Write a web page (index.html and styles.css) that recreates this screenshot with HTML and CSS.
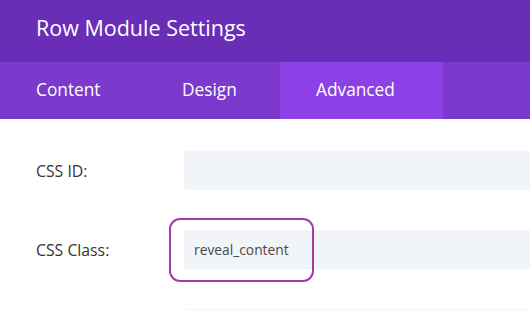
FILE: index.html
```html
<!DOCTYPE html>
<html lang="en">

<head>
    <meta charset="UTF-8">
    <meta name="viewport" content="width=device-width, initial-scale=1.0">
    <title>Row Module Settings</title>
    <link rel="stylesheet" href="styles.css">
</head>

<body>
    <div class="modal-header">Row Module Settings</div>

    <!-- 탭 -->
    <div class="tabs">
        <div class="tab tab-content">Content</div>
        <div class="tab tab-design">Design</div>
        <div class="tab tab-advanced active">Advanced</div>
    </div>

    <div class="settings">
        <div class="field">
            <label>CSS ID:</label>
            <div class="input"></div>
        </div>
        <div class="field">
            <label>CSS Class:</label>
            <div class="input">
                <span class="value">reveal_content</span>
                <span class="highlight"></span>
            </div>
        </div>
        <div class="field">
            <label></label>
            <div class="input"></div>
        </div>
    </div>
</body>

</html>
```

FILE: styles.css
```css
body {
    font-family: "Open Sans", sans-serif;
    margin: 0;
    padding: 0;
    width: 530px;
    height: 310px;
    overflow: hidden;
    background-color: #ffffff;
}

.modal-header {
    background-color: #6a2db8;
    color: #ffffff;
    font-size: 21.5px;
    height: 62px;
    line-height: 56px;
    padding-left: 36px;
    box-sizing: border-box;
}

.tabs {
    display: flex;
    background-color: #7b3acb;
    height: 57px;
}

.tab {
    color: #ffffff;
    font-size: 17.3px;
    line-height: 56px;
    padding-left: 36px;
    box-sizing: border-box;
}

.tab-content {
    width: 146px;
}

.tab-design {
    width: 134px;
}

.tab-advanced {
    width: 163px;
}

.tab.active {
    background-color: #8c41e6;
}

.settings {
    height: 191px;
    overflow: hidden;
    padding-top: 32px;
    box-sizing: border-box;
}

.field {
    display: flex;
    align-items: center;
    margin-bottom: 40px;
}

.field label {
    width: 184px;
    padding-left: 36px;
    box-sizing: border-box;
    font-size: 15.8px;
    color: #333333;
}

.input {
    position: relative;
    flex: 1;
    height: 39px;
    background-color: #f1f4f8;
    border-radius: 3px 0 0 3px;
    display: flex;
    align-items: center;
}

.value {
    padding-left: 10px;
    font-size: 13.8px;
    color: #4a4a4a;
}

/* 강조 박스 */
.highlight {
    position: absolute;
    left: -15px;
    top: -12px;
    width: 145px;
    height: 64px;
    border: 2px solid #a23ba6;
    border-radius: 11px;
    box-sizing: border-box;
}
```
